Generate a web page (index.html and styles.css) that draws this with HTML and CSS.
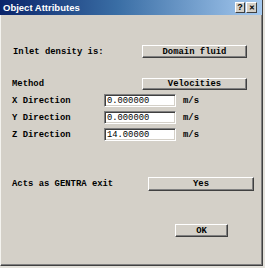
FILE: index.html
```html
<!DOCTYPE html>
<html lang="en">
<head>
  <meta charset="UTF-8" />
  <title>Object Attributes</title>
  <link rel="stylesheet" href="styles.css">
</head>
<body>
  <div class="window">
    <!-- Title bar -->
    <div class="titlebar">
      <span class="title">Object Attributes</span>
      <div class="caption-buttons">
        <span class="cap-btn">?</span>
        <span class="cap-btn close">&#x2715;</span>
      </div>
    </div>

    <div class="content">
      <div class="row row-inlet">
        <span class="label">Inlet density is:</span>
        <button class="btn btn-wide">Domain fluid</button>
      </div>

      <div class="row row-method">
        <span class="label">Method</span>
        <button class="btn btn-wide">Velocities</button>
      </div>

      <div class="vel-rows">
        <div class="field">
          <span class="label">X Direction</span>
          <input class="num" type="text" value="0.000000">
          <span class="unit">m/s</span>
        </div>
        <div class="field">
          <span class="label">Y Direction</span>
          <input class="num" type="text" value="0.000000">
          <span class="unit">m/s</span>
        </div>
        <div class="field">
          <span class="label">Z Direction</span>
          <input class="num" type="text" value="14.00000">
          <span class="unit">m/s</span>
        </div>
      </div>

      <div class="row row-exit">
        <span class="label">Acts as GENTRA exit</span>
        <button class="btn btn-yes">Yes</button>
      </div>

      <div class="row row-ok">
        <button class="btn btn-ok">OK</button>
      </div>
    </div>
  </div>
</body>
</html>
```

FILE: styles.css
```css
html, body {
  margin: 0;
  padding: 0;
  background: #e4e2dc;
  width: 265px;
  height: 268px;
  overflow: hidden;
}

.window {
  box-sizing: border-box;
  width: 263px;
  height: 266px;
  background: #d4d0c8;
  border-left: 1px solid #f4f3ef;
  border-right: 1px solid #404040;
  border-bottom: 1px solid #404040;
  box-shadow: inset -1px -1px 0 #808080;
  display: flex;
  flex-direction: column;
}

.titlebar {
  height: 15px;
  margin-left: -1px;
  background: linear-gradient(to right, #0a246a 0%, #3a6ea5 45%, #a6caf0 100%);
  display: flex;
  align-items: center;
  padding-left: 3px;
  padding-right: 5px;
}

.title {
  font-family: "Liberation Sans", Arial, sans-serif;
  font-weight: bold;
  font-size: 9.5px;
  color: #fff;
  flex: 1;
}

.caption-buttons {
  display: flex;
  gap: 1px;
}

.cap-btn {
  box-sizing: border-box;
  width: 10px;
  height: 11px;
  background: #d4d0c8;
  border-top: 1px solid #fff;
  border-left: 1px solid #fff;
  border-right: 1px solid #404040;
  border-bottom: 1px solid #404040;
  font-family: "Liberation Sans", Arial, sans-serif;
  font-weight: bold;
  font-size: 9px;
  line-height: 9px;
  text-align: center;
  color: #000;
}

.cap-btn.close {
  width: 11px;
  font-size: 7px;
}

.content {
  padding-left: 11px;
  display: flex;
  flex-direction: column;
}

.label, .unit {
  font-family: "Liberation Mono", "Courier New", monospace;
  font-weight: bold;
  font-size: 8.9px;
  color: #000;
  white-space: pre;
}

.row {
  display: flex;
  align-items: center;
}

.btn {
  box-sizing: border-box;
  height: 13px;
  padding: 0;
  background: #d4d0c8;
  border-top: 1px solid #fff;
  border-left: 1px solid #fff;
  border-right: 1px solid #404040;
  border-bottom: 1px solid #404040;
  box-shadow: inset -1px -1px 0 #808080;
  font-family: "Liberation Mono", "Courier New", monospace;
  font-weight: bold;
  font-size: 8.9px;
  color: #000;
  line-height: 10px;
}

.row-inlet {
  margin-top: 30px;
  padding-left: 1px;
}

.btn-wide {
  width: 105px;
  margin-left: auto;
  margin-right: 15px;
}

.row-method {
  margin-top: 20px;
}

.row-method .btn {
  height: 12px;
}

.vel-rows {
  margin-top: 4px;
  display: flex;
  flex-direction: column;
  gap: 4px;
}

.field {
  display: grid;
  grid-template-columns: 92px 72px auto;
  align-items: center;
}

.field .unit {
  margin-left: 7px;
}

.num {
  box-sizing: border-box;
  width: 72px;
  height: 13px;
  margin: 0;
  padding: 0 0 0 2px;
  background: #fff;
  border-top: 1px solid #808080;
  border-left: 1px solid #808080;
  border-right: 1px solid #fff;
  border-bottom: 1px solid #fff;
  box-shadow: inset 1px 1px 0 #404040, inset -1px -1px 0 #d4d0c8;
  font-family: "Liberation Mono", "Courier New", monospace;
  font-size: 8.8px;
  color: #000;
}

.row-exit {
  margin-top: 36px;
}

.btn-yes {
  width: 106px;
  height: 14px;
  margin-left: auto;
  margin-right: 8px;
}

.row-ok {
  margin-top: 33px;
  justify-content: flex-end;
}

.btn-ok {
  width: 53px;
  margin-right: 34px;
}
```
